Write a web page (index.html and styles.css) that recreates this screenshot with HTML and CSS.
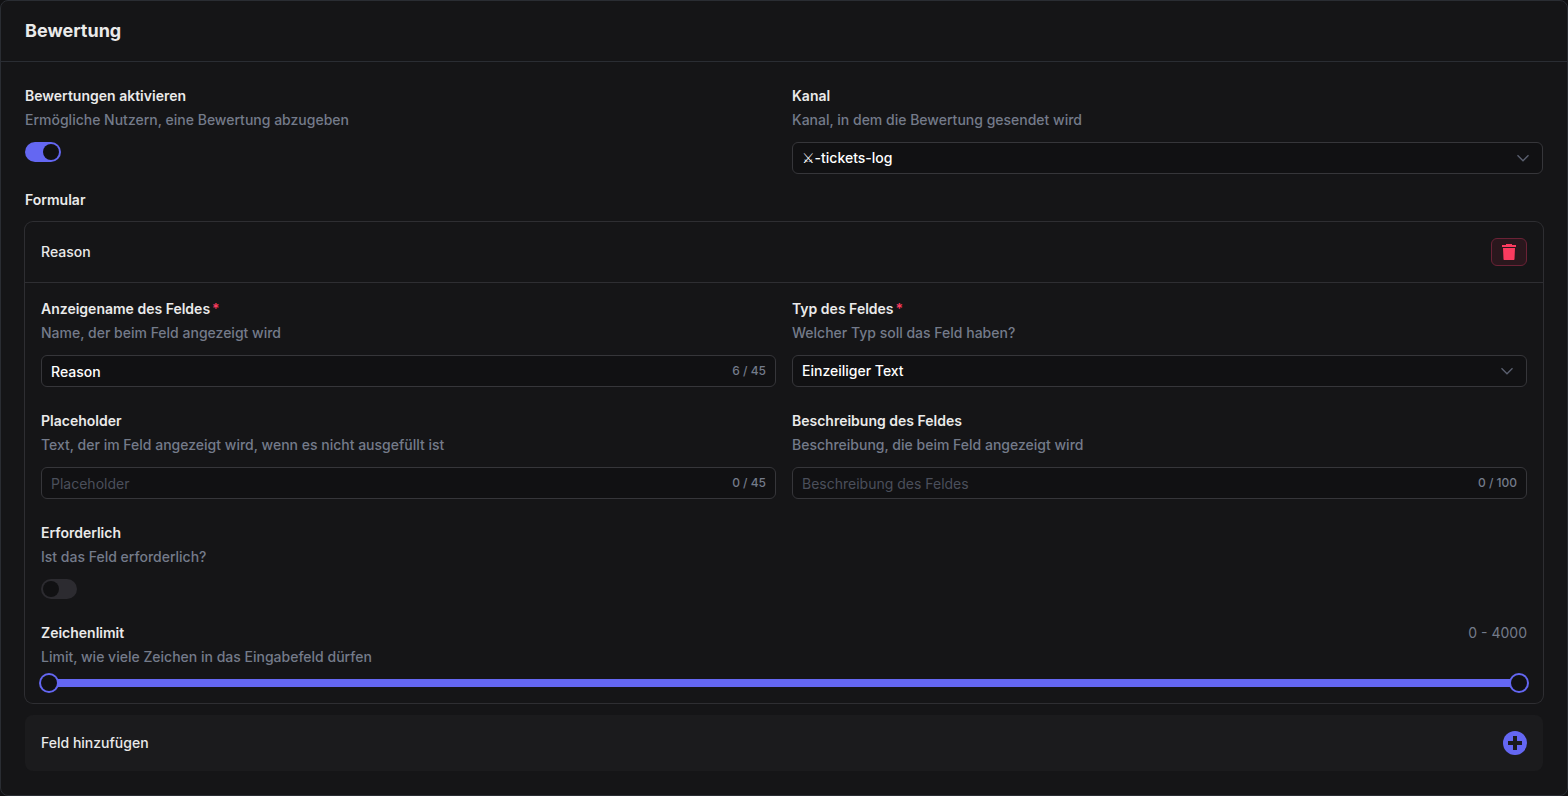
FILE: index.html
```html
<!DOCTYPE html>
<html lang="de">
<head>
    <meta charset="UTF-8">
    <meta name="viewport" content="width=device-width, initial-scale=1.0">
    <title>Bewertung</title>
    <link rel="stylesheet" href="styles.css">
</head>
<body>
    <section class="panel">
        <header class="panel-header">
            <h1>Bewertung</h1>
        </header>

        <form class="panel-body">
            <div class="row">
                <div class="field">
                    <label for="ratingEnabled">Bewertungen aktivieren</label>
                    <p class="hint">Ermögliche Nutzern, eine Bewertung abzugeben</p>
                    <input class="toggle" type="checkbox" id="ratingEnabled" checked>
                </div>
                <div class="field">
                    <label for="channel">Kanal</label>
                    <p class="hint">Kanal, in dem die Bewertung gesendet wird</p>
                    <div class="control">
                        <select id="channel">
                            <option>⚔-tickets-log</option>
                        </select>
                        <svg class="chevron" viewBox="0 0 20 20"><path d="M4.5 7.2l5.5 5.6 5.5-5.6"/></svg>
                    </div>
                </div>
            </div>

            <h2>Formular</h2>

            <div class="card">
                <div class="card-header">
                    <span>Reason</span>
                    <button type="button" class="delete" aria-label="Feld löschen">
                        <svg viewBox="0 0 16 18">
                            <path d="M5 2V1h6v1h4v2H1V2z"/>
                            <path d="M2 5h12l-.5 11c0 .6-.4 1-1 1h-9c-.6 0-1-.4-1-1z"/>
                        </svg>
                    </button>
                </div>

                <div class="card-body">
                    <div class="row">
                        <div class="field">
                            <label for="fieldName">Anzeigename des Feldes<span class="required">*</span></label>
                            <p class="hint">Name, der beim Feld angezeigt wird</p>
                            <div class="control">
                                <input type="text" id="fieldName" value="Reason" maxlength="45">
                                <span class="counter">6 / 45</span>
                            </div>
                        </div>
                        <div class="field">
                            <label for="fieldType">Typ des Feldes<span class="required">*</span></label>
                            <p class="hint">Welcher Typ soll das Feld haben?</p>
                            <div class="control">
                                <select id="fieldType">
                                    <option>Einzeiliger Text</option>
                                </select>
                                <svg class="chevron" viewBox="0 0 20 20"><path d="M4.5 7.2l5.5 5.6 5.5-5.6"/></svg>
                            </div>
                        </div>
                        <div class="field">
                            <label for="fieldPlaceholder">Placeholder</label>
                            <p class="hint">Text, der im Feld angezeigt wird, wenn es nicht ausgefüllt ist</p>
                            <div class="control">
                                <input type="text" id="fieldPlaceholder" placeholder="Placeholder" maxlength="45">
                                <span class="counter">0 / 45</span>
                            </div>
                        </div>
                        <div class="field">
                            <label for="fieldDescription">Beschreibung des Feldes</label>
                            <p class="hint">Beschreibung, die beim Feld angezeigt wird</p>
                            <div class="control">
                                <input type="text" id="fieldDescription" placeholder="Beschreibung des Feldes" maxlength="100">
                                <span class="counter">0 / 100</span>
                            </div>
                        </div>
                    </div>

                    <div class="field">
                        <label for="fieldRequired">Erforderlich</label>
                        <p class="hint">Ist das Feld erforderlich?</p>
                        <input class="toggle" type="checkbox" id="fieldRequired">
                    </div>

                    <div class="field">
                        <div class="limit-title">
                            <label for="limitMin">Zeichenlimit</label>
                            <output>0 - 4000</output>
                        </div>
                        <p class="hint">Limit, wie viele Zeichen in das Eingabefeld dürfen</p>
                        <div class="range">
                            <input type="range" id="limitMin" min="0" max="4000" value="0">
                            <input type="range" id="limitMax" min="0" max="4000" value="4000" aria-label="Maximale Zeichenanzahl">
                        </div>
                    </div>
                </div>
            </div>

            <button type="button" class="add">
                Feld hinzufügen
                <svg viewBox="0 0 24 24">
                    <circle cx="12" cy="12" r="12"/>
                    <path d="M12 5v14M5 12h14"/>
                </svg>
            </button>
        </form>
    </section>
</body>
</html>
```
FILE: styles.css
```css
:root {
    --bg: #151517;
    --input: #111113;
    --line: #2e2e32;
    --text: #eaeaea;
    --muted: #747b8a;
    --accent: #6467f2;
    --red: #fb3b5f;
}
* {
    box-sizing: border-box;
}
body {
    margin: 0;
    background: #111113;
    color: var(--text);
    font-family: Inter, "DejaVu Sans", sans-serif;
    font-size: 14px;
    line-height: 20px;
}
h1, h2, p {
    margin: 0;
}
button, input, select {
    font: inherit;
    color: inherit;
}
.panel {
    background: var(--bg);
    border: 1px solid #2a2d33;
    border-radius: 8px;
}
.panel-header {
    padding: 16px 24px;
    border-bottom: 1px solid #2a2d33;
}
.panel-header h1 {
    font-size: 18px;
    font-weight: 700;
    line-height: 28px;
}
.panel-body {
    padding: 24px;
}
.row {
    display: grid;
    grid-template-columns: 1fr 1fr;
    gap: 24px 16px;
}
.field {
    display: flex;
    flex-direction: column;
    align-items: stretch;
}
.field label {
    font-weight: 600;
}
.required {
    margin-left: 2px;
    color: var(--red);
}
.hint {
    margin: 4px 0 12px;
    color: var(--muted);
    font-weight: 500;
}
h2 {
    margin: 16px 0 12px;
    font-size: 14px;
    font-weight: 600;
}

/* inputs */
.control {
    display: flex;
    align-items: center;
    position: relative;
}
.control input,
.control select {
    appearance: none;
    width: 100%;
    height: 32px;
    border: 1px solid #36363a;
    border-radius: 6px;
    background: var(--input);
    color: #fff;
    font-weight: 500;
    outline: none;
}
.control input {
    padding: 0 70px 0 9px;
}
.control select {
    padding: 0 36px 0 9px;
}
.control input::placeholder {
    color: #4b4f5b;
    font-weight: 400;
    opacity: 1;
}
.counter {
    position: absolute;
    right: 10px;
    color: var(--muted);
    font-size: 12px;
    font-weight: 500;
}
.chevron {
    position: absolute;
    right: 10px;
    width: 20px;
    height: 20px;
    fill: none;
    stroke: #5b6070;
    stroke-width: 1.3;
    pointer-events: none;
}
.toggle {
    appearance: none;
    display: flex;
    width: 36px;
    height: 20px;
    margin: 0;
    padding: 2px;
    border-radius: 10px;
    background: #2c2b30;
    cursor: pointer;
}
.toggle::before {
    content: "";
    width: 16px;
    height: 16px;
    border-radius: 50%;
    background: var(--input);
}
.toggle:checked {
    justify-content: flex-end;
    background: var(--accent);
}

/* form field card */
.card {
    border-radius: 8px;
    box-shadow: 0 0 0 1px var(--line);
}
.card-header {
    display: flex;
    align-items: center;
    justify-content: space-between;
    padding: 16px;
    border-bottom: 1px solid var(--line);
    font-weight: 500;
}
.card-body {
    display: flex;
    flex-direction: column;
    gap: 24px;
    padding: 16px;
}
.delete {
    display: flex;
    align-items: center;
    justify-content: center;
    width: 36px;
    height: 28px;
    padding: 0;
    border: 1px solid #6b2236;
    border-radius: 6px;
    background: #2a171d;
    cursor: pointer;
}
.delete svg {
    width: 16px;
    height: 18px;
    fill: var(--red);
}
.limit-title {
    display: flex;
    justify-content: space-between;
}
.limit-title output {
    color: var(--muted);
}

/* two sliders stacked in the same grid cell */
.range {
    display: grid;
    height: 8px;
    align-items: center;
    border-radius: 4px;
    background: linear-gradient(var(--accent), var(--accent)) center / calc(100% - 16px) 100% no-repeat;
}
.range input {
    appearance: none;
    grid-area: 1 / 1;
    width: 100%;
    height: 8px;
    margin: 0;
    background: none;
    pointer-events: none;
}
.range input::-webkit-slider-thumb {
    appearance: none;
    width: 16px;
    height: 16px;
    border-radius: 50%;
    background: var(--input);
    box-shadow: 0 0 0 2px var(--accent);
    pointer-events: auto;
}

.add {
    display: flex;
    align-items: center;
    justify-content: space-between;
    width: 100%;
    margin-top: 12px;
    padding: 16px;
    border: none;
    border-radius: 8px;
    background: #1b1b1d;
    font-weight: 500;
    cursor: pointer;
}
.add svg {
    width: 24px;
    height: 24px;
    fill: var(--accent);
}
.add path {
    stroke: #1b1b1d;
    stroke-width: 4;
}
```
